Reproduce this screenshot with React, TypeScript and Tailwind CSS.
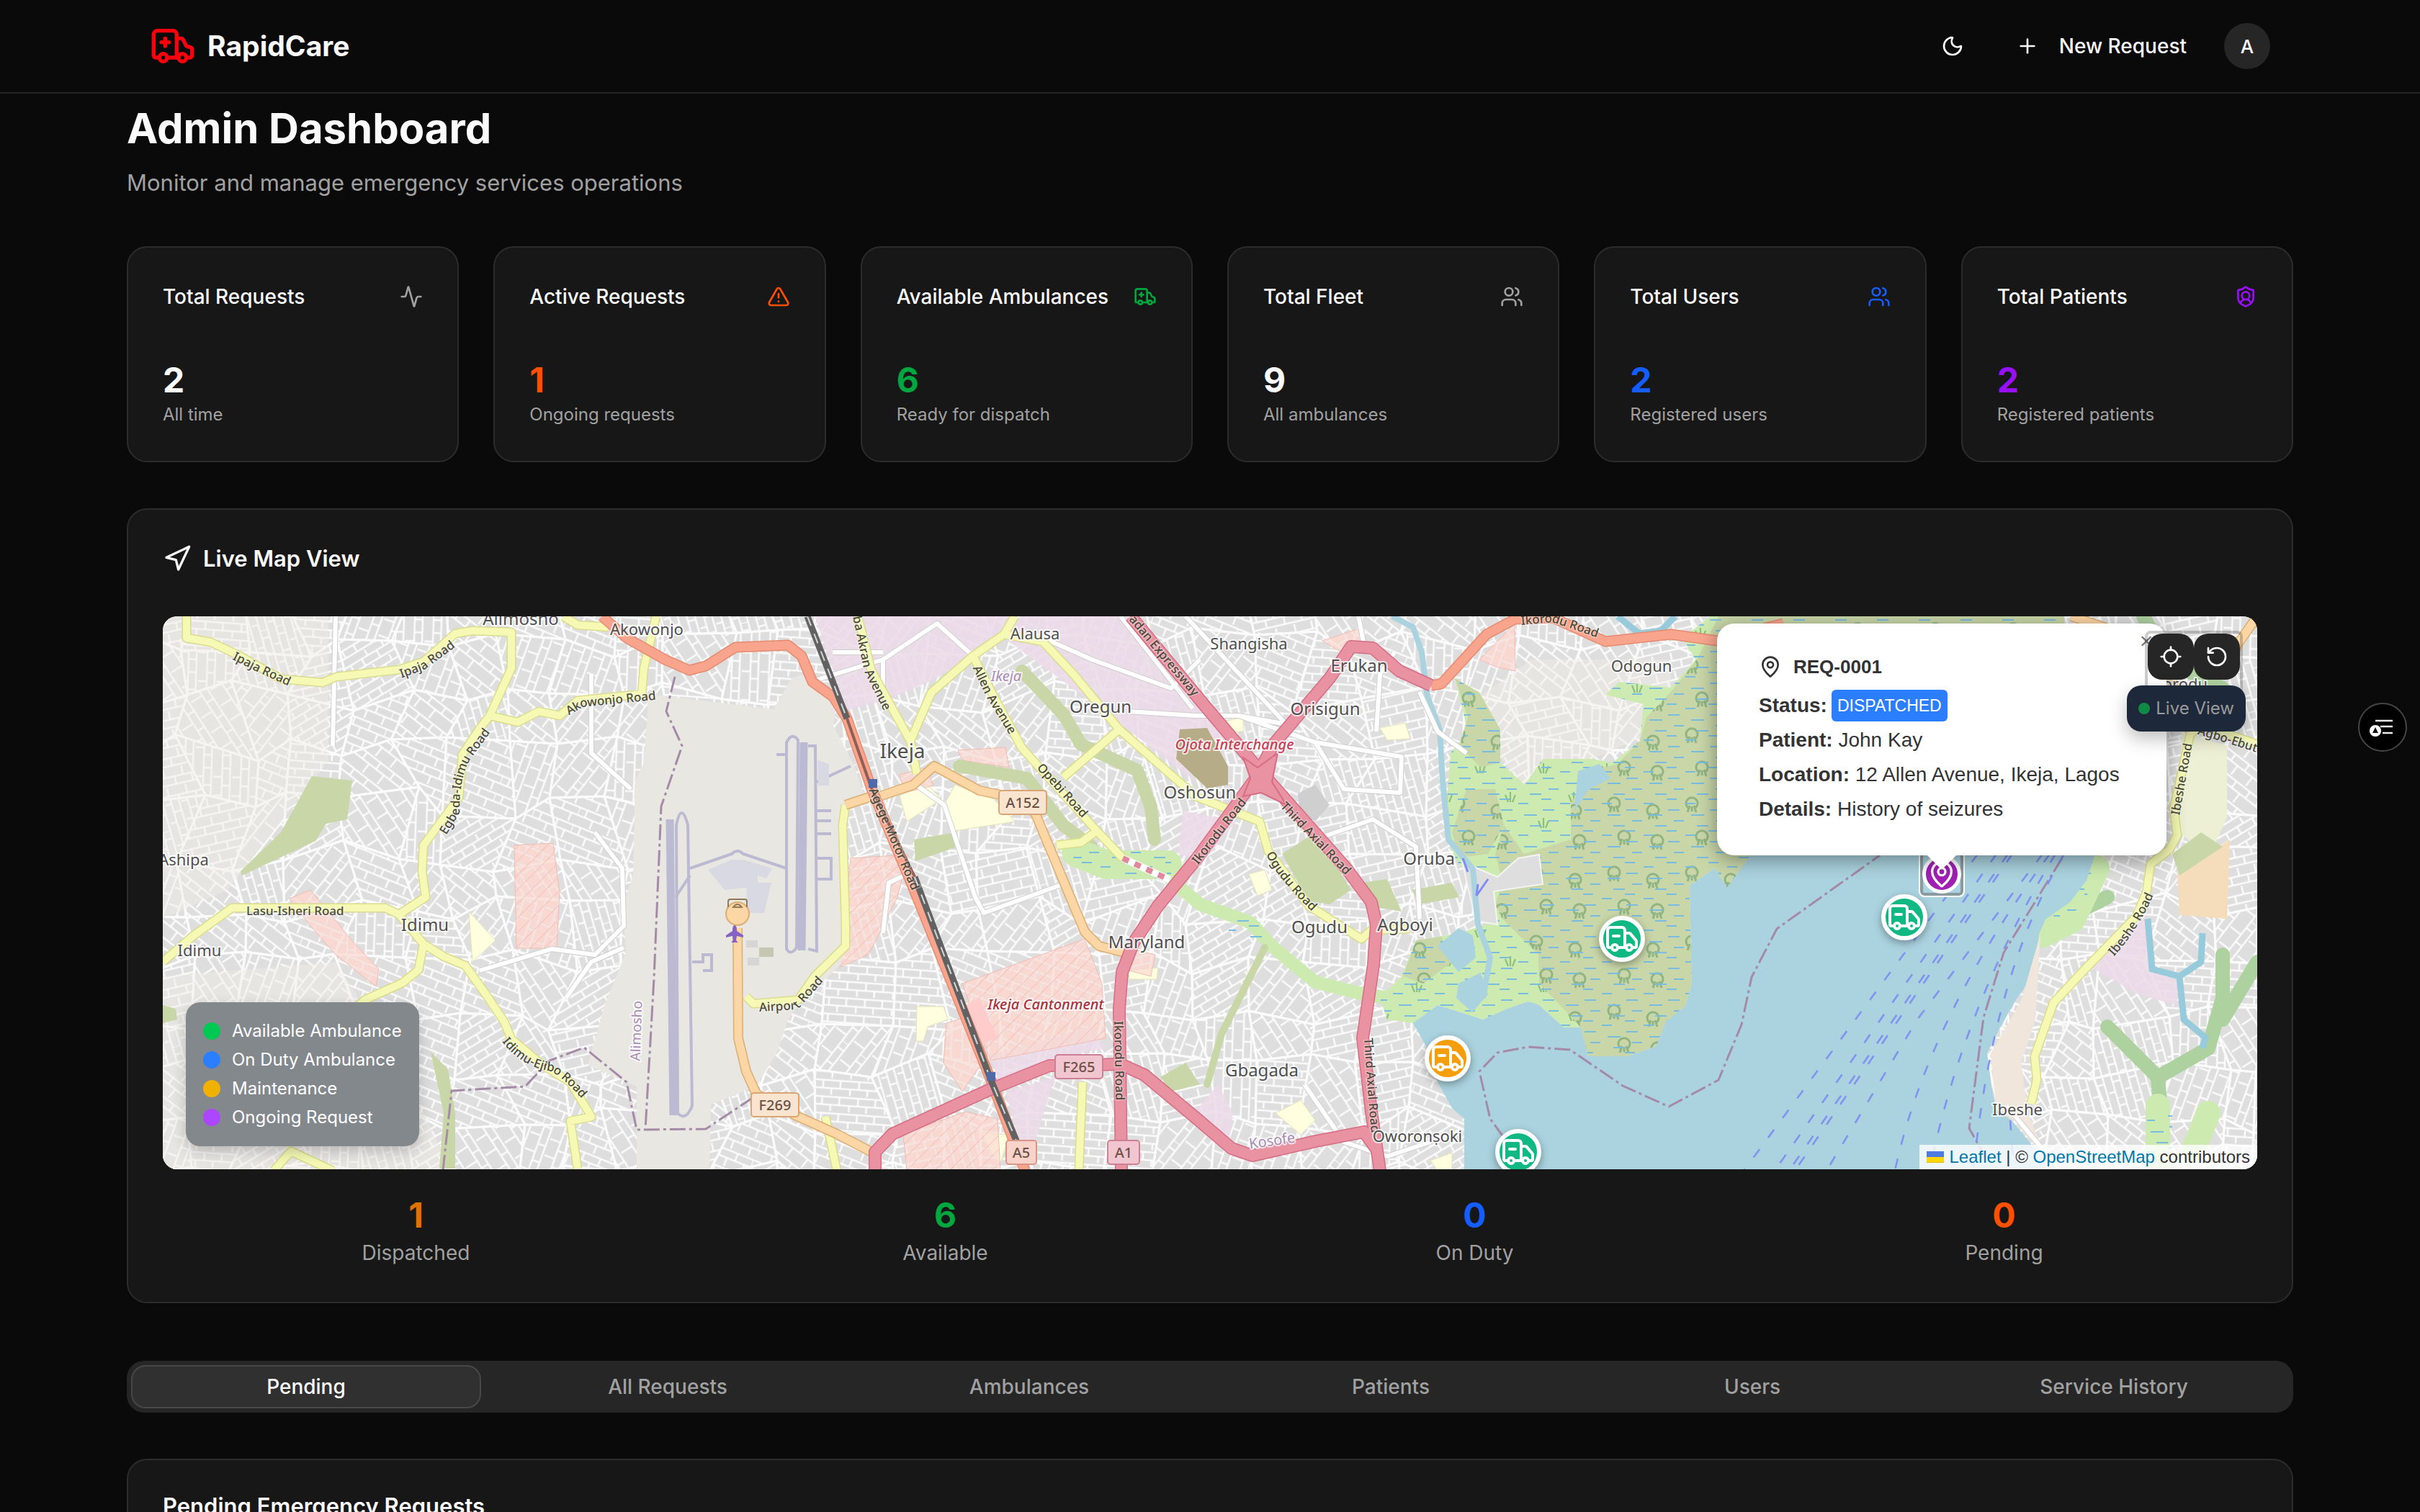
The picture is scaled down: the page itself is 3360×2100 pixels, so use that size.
import { useState } from 'react';
import {
  Activity,
  Ambulance,
  Locate,
  MapPin,
  Moon,
  Navigation,
  Plus,
  RotateCcw,
  ShieldUser,
  TriangleAlert,
  Users,
} from 'lucide-react';
import type { LucideIcon } from 'lucide-react';

interface Stat {
  title: string;
  value: number;
  caption: string;
  icon: LucideIcon;
  iconClass: string;
  valueClass: string;
}

const stats: Stat[] = [
  { title: 'Total Requests', value: 2, caption: 'All time', icon: Activity, iconClass: 'text-[#a1a1a1]', valueClass: 'text-[#fafafa]' },
  { title: 'Active Requests', value: 1, caption: 'Ongoing requests', icon: TriangleAlert, iconClass: 'text-[#ff4f00]', valueClass: 'text-[#ff4f00]' },
  { title: 'Available Ambulances', value: 6, caption: 'Ready for dispatch', icon: Ambulance, iconClass: 'text-[#00a63e]', valueClass: 'text-[#00a63e]' },
  { title: 'Total Fleet', value: 9, caption: 'All ambulances', icon: Users, iconClass: 'text-[#a1a1a1]', valueClass: 'text-[#fafafa]' },
  { title: 'Total Users', value: 2, caption: 'Registered users', icon: Users, iconClass: 'text-[#155dfc]', valueClass: 'text-[#155dfc]' },
  { title: 'Total Patients', value: 2, caption: 'Registered patients', icon: ShieldUser, iconClass: 'text-[#9810fa]', valueClass: 'text-[#9810fa]' },
];

const mapTotals = [
  { label: 'Dispatched', value: 1, color: 'text-[#e17100]' },
  { label: 'Available', value: 6, color: 'text-[#00a63e]' },
  { label: 'On Duty', value: 0, color: 'text-[#155dfc]' },
  { label: 'Pending', value: 0, color: 'text-[#ff4f00]' },
];

const legend = [
  { label: 'Available Ambulance', color: 'bg-[#00c951]' },
  { label: 'On Duty Ambulance', color: 'bg-[#2b7fff]' },
  { label: 'Maintenance', color: 'bg-[#f0b100]' },
  { label: 'Ongoing Request', color: 'bg-[#ad46ff]' },
];

const tabs = ['Pending', 'All Requests', 'Ambulances', 'Patients', 'Users', 'Service History'];

const ambulances = [
  { x: 2026, y: 448, color: 'bg-[#10b981]' },
  { x: 1784, y: 614, color: 'bg-[#f59e0b]' },
  { x: 1882, y: 744, color: 'bg-[#10b981]' },
  { x: 2418, y: 418, color: 'bg-[#10b981]' },
];

// ---- base map ----

const makeRandom = (seed: number) => () => {
  seed = (seed * 16807) % 2147483647;
  return seed / 2147483647;
};

const streetAngles = [4, 22, 38, 57, 74, 92, 110, 128, 149, 167];

const buildBlocks = () => {
  const rand = makeRandom(4211);
  const step = 74;
  const cols = 41;
  const rows = 12;
  const pts: number[][][] = [];
  for (let r = 0; r <= rows; r++) {
    pts.push([]);
    for (let c = 0; c <= cols; c++) {
      pts[r].push([
        Math.round((c - 0.5) * step + (rand() - 0.5) * 46),
        Math.round((r - 0.5) * step + (rand() - 0.5) * 46),
      ]);
    }
  }
  const blocks: { d: string; n: number }[] = [];
  for (let r = 0; r < rows; r++) {
    for (let c = 0; c < cols; c++) {
      const d = [pts[r][c], pts[r][c + 1], pts[r + 1][c + 1], pts[r + 1][c]].map((p) => p.join(' ')).join('L');
      blocks.push({ d: `M${d}Z`, n: Math.floor(rand() * streetAngles.length) });
    }
  }
  return blocks;
};

const blocks = buildBlocks();

const STREETS = 'M0 3H70M0 14H70M10 3V14M34 3V14M22 14V36M48 14V36M58 3V14';

const WETLAND =
  'M1794 86L1828 106L1857 157L1857 203L1891 234L1916 198L1983 198L2013 203L2051 173L2056 122L2003 109L2022 91L2094 99L2128 60L2110 30L2149 0H2640V330H2206L2200 354L2172 377L2155 350L2117 367L2120 374L2123 511L2114 541L2086 564L2074 597L2034 611L1979 611L1969 571L1945 571L1911 540L1896 535L1867 545L1833 560L1770 540L1736 565L1700 560L1690 530L1720 500L1740 450L1800 440L1836 428L1850 400L1826 372L1796 340L1782 300L1784 240L1788 190L1812 160Z';
const MANGROVE =
  'M2094 105L2060 140L2051 173L2020 205L1980 215L1955 260L1955 310L1890 330L1862 290L1850 330L1860 370L1850 400L1860 420L1910 470L1911 510L1945 545L1969 571L1979 611L2034 611L2074 597L2086 564L2114 541L2123 511L2120 374L2155 350L2172 377L2206 334L2640 330V0H2160L2130 60ZM1794 86L1828 106L1857 157L1857 203L1830 210L1800 180L1812 140ZM1810 240H1850L1862 290L1840 330L1800 335L1790 300ZM1740 450L1775 445L1790 480L1750 510L1722 500Z';
const LAGOON =
  'M1736 565L1770 540L1833 560L1867 545L1896 535L1911 540L1945 571L1969 571L1979 611L2034 611L2074 597L2086 564L2114 541L2123 511L2120 374L2155 350L2172 377L2206 330H2683L2671 367L2648 397L2614 421L2605 441L2599 497L2574 531L2551 571L2533 607L2539 651L2545 684L2568 701L2597 737L2614 754V770H1807V698L1790 683L1770 647L1756 601Z';

const pinkAreas = [
  'M905 0H1180L1150 40L1067 90L1000 118L950 130Z',
  'M1190 0H1345L1434 101L1494 168L1407 178L1434 230L1333 152L1231 76L1168 30Z',
  'M1416 270L1490 285L1445 340L1410 330Z',
  'M1149 610L1290 570L1310 600L1231 615L1160 645Z',
  'M1170 660L1239 640L1220 700L1200 770Z',
  'M1432 690L1465 650L1486 690L1480 730Z',
  'M2754 414L2760 491L2797 507L2797 541L2740 524L2677 487L2723 447Z',
];

const redAreas = [
  'M488 318L542 315L551 384L547 461H491Z',
  'M955 336L1035 331L1020 390L980 470L940 487Z',
  'M1110 510L1280 448L1304 510L1309 586L1149 617Z',
  'M1028 719L1115 688L1159 698L1163 770H1033Z',
  'M176 392L205 380L230 410L262 450L300 490L296 514L240 470L205 430Z',
  'M1023 220L1060 210L1070 235L1030 245Z',
  'M1104 186L1170 182L1175 210L1110 200Z',
  'M1088 565L1120 555L1145 610L1110 660L1084 620Z',
  'M1610 34L1664 16L1672 36L1640 52Z',
  'M1828 60L1877 10L1878 76L1850 70Z',
  'M1336 460L1378 470L1372 500L1334 490Z',
];

const yellowAreas = [
  'M1086 260L1100 234L1154 254L1183 285L1100 298Z',
  'M1023 249L1062 234L1081 254L1033 285Z',
  'M1047 542H1084L1090 560L1062 570L1056 590H1046Z',
  'M425 410L462 450L430 480Z',
  'M1136 717L1175 720L1163 760L1150 745Z',
  'M1508 358L1530 352L1540 380L1520 388Z',
  'M1690 155L1725 148L1732 170L1700 172Z',
  'M1545 690L1580 672L1600 700L1580 720Z',
  'M1340 492L1382 488L1380 504L1342 504Z',
  'M1760 756L1790 745L1790 770H1770Z',
  'M1478 145L1500 140V160H1480Z',
];

const greenAreas = [
  'M108 354L164 300L207 222L263 228L256 282L227 288L212 312L110 360Z',
  'M372 605L396 629L406 690V767H384L390 690Z',
  'M1043 310L1100 300L1104 320L1045 340Z',
  'M0 540L18 545L20 560L0 565Z',
  'M1385 640L1420 620L1440 650L1400 660Z',
  'M1554 330L1600 300L1650 380L1620 400L1590 395Z',
  'M1664 370L1700 365L1720 410L1690 405Z',
  'M1734 380L1790 370L1800 390L1745 400Z',
  'M2790 330L2830 300L2860 320L2800 360Z',
];

const yellowRoads = [
  'M33 0V30L67 36L105 54L164 87L222 92L241 84L328 74L362 63L406 24L430 20L484 22V72L454 138L440 156L416 192L411 252L362 318L360 354L365 390L328 414',
  'M0 480L42 444L96 405H309L328 414L362 455L391 473L420 485L450 527L474 563L484 587L527 623L566 647L595 695L566 701L576 767',
  'M362 455L355 491L333 509L280 533L230 575',
  'M454 138L493 147L522 132L551 138L576 117L665 108L668 72L685 0',
  'M556 0L576 12L619 15',
  'M154 770L178 743L236 770',
  'M965 0L984 76L1038 173L1047 219',
  'M1038 173L1067 106L1125 55L1168 25L1183 0',
  'M1125 55L1154 112L1193 183L1294 295L1333 336',
  'M1168 25L1222 35L1265 81L1328 157L1434 250L1523 285L1535 326L1591 402L1664 448L1678 436L1731 434',
  'M1328 157L1250 224',
  'M1294 300L1275 314L1241 318',
  'M1277 647L1272 770',
  'M948 262L944 290L948 430V458L905 500L882 533L820 538L810 528',
  'M920 695L936 770',
  'M2815 164L2792 267L2797 304L2786 324L2760 344L2754 384L2740 417L2665 494L2625 537L2599 611L2602 644L2594 677',
  'M2815 164L2830 150L2908 178',
];

const orangeRoads = [
  'M798 433L799 586L810 632L824 663L878 693L936 719L984 744',
  'M984 254L1042 234L1071 208L1134 242L1193 254L1212 275L1280 438L1300 458L1343 469L1331 494',
  'M984 250L948 262',
  'M2650 0L2740 30L2790 90L2815 160',
  'M2908 0L2880 40L2870 70',
];

const salmonRoads = [
  'M610 0L644 30L697 60L731 75L754 69L795 43L868 40L887 55L902 91L931 112L950 142L984 239L1042 377L1149 642L1197 770',
  'M1761 96L1775 94L1838 25L1877 4L1930 2L2003 35L2094 25L2158 34L2250 10',
];

const motorways = [
  'M1344 0L1445 122L1523 214L1644 351L1678 397L1685 428L1681 484L1666 586L1678 688L1690 770',
  'M1761 96L1717 76L1680 44L1650 42L1620 86L1542 178L1518 224L1436 336L1382 402L1348 453L1332 494L1328 545L1331 770',
  'M989 770V744L1013 719L1149 657L1231 624L1330 622L1363 637L1436 698L1484 739L1513 749L1601 729L1668 716L1685 740',
];

const whiteRoads = [
  'M1420 0L1560 150L1494 138L1434 138L1340 132',
  'M1330 0L1430 128',
  'M1200 20L1290 60L1400 100L1440 60',
  'M930 50H1000M1000 60V110',
  'M902 90L1000 60L1075 10L1125 55',
  'M1494 138L1600 175L1720 195L1718 245L1640 240L1600 175',
  'M1040 230L1085 262L1128 390L1140 412L1250 372',
  'M1600 310L1680 282L1740 320L1745 420',
  'M440 492L540 462L600 470L640 430L638 350L600 300',
  'M240 0L236 180',
  'M595 80V190L650 240',
  'M1000 440L1008 370L1040 355',
  'M1745 105L1770 160L1810 190',
  'M1685 160L1690 80L1710 50',
  'M1585 650L1640 730L1700 750L1760 730',
  'M2560 680L2610 740',
  'M560 530L595 480L640 460',
  'M1660 0L1668 40',
];

const boundaries = [
  'M711 84L699 132L721 180L692 264L682 503L670 713',
  'M389 770L401 659L503 653L537 617L585 599L644 647L658 713L754 712L820 668',
  'M1862 724L1843 698L1828 632L1853 606L1896 598L1954 602L2027 652L2091 681L2160 644L2192 567L2206 501L2241 434L2384 332',
  'M2637 336L2556 467L2528 557L2508 711L2530 750',
];

const ferries = [
  'M2520 330L2195 770',
  'M2546 330L2238 770',
  'M2562 330L2258 770',
  'M2568 330L2266 770',
  'M2610 330L2436 560L2310 770',
  'M2620 330Q2450 560 2405 770',
  'M2628 330Q2500 540 2453 770',
  'M2640 330Q2540 500 2514 770',
  'M2565 700L2570 770',
];

const places = [
  { t: 'Alimosho', x: 497, y: 12, s: 24 },
  { t: 'Akowonjo', x: 672, y: 26, s: 22 },
  { t: 'Ashipa', x: 29, y: 346, s: 22 },
  { t: 'Idimu', x: 364, y: 437, s: 24 },
  { t: 'Idimu', x: 51, y: 472, s: 22 },
  { t: 'Ikeja', x: 1027, y: 197, s: 28 },
  { t: 'Alausa', x: 1211, y: 32, s: 22 },
  { t: 'Oregun', x: 1302, y: 134, s: 24 },
  { t: 'Shangisha', x: 1508, y: 46, s: 22 },
  { t: 'Erukan', x: 1661, y: 77, s: 24 },
  { t: 'Orisigun', x: 1614, y: 137, s: 24 },
  { t: 'Odogun', x: 2053, y: 77, s: 22 },
  { t: 'Oshosun', x: 1440, y: 253, s: 24 },
  { t: 'Oruba', x: 1758, y: 345, s: 24 },
  { t: 'Ogudu', x: 1606, y: 440, s: 24 },
  { t: 'Agboyi', x: 1725, y: 437, s: 24 },
  { t: 'Maryland', x: 1366, y: 461, s: 24 },
  { t: 'Gbagada', x: 1526, y: 639, s: 24 },
  { t: 'Oworonṣoki', x: 1742, y: 730, s: 22 },
  { t: 'Ibeshe', x: 2575, y: 693, s: 22 },
  { t: 'orodu', x: 2808, y: 102, s: 22 },
];

const roadNames = [
  { t: 'Ipaja Road', d: 'M98 56L130 72L200 104' },
  { t: 'Ipaja Road', d: 'M330 82L362 70L430 20' },
  { t: 'Akowonjo Road', d: 'M562 134L582 122L720 108' },
  { t: 'Egbeda-Idimu Road', d: 'M390 302L408 272Q408 220 424 196L480 120' },
  { t: 'Lasu-Isheri Road', d: 'M116 411H300' },
  { t: 'Idimu-Ejibo Road', d: 'M474 588Q500 622 540 628Q566 640 620 710' },
  { t: 'ba Akran Avenue', d: 'M962 0L978 76L1020 160' },
  { t: 'Allen Avenue', d: 'M1128 70L1148 112L1200 196' },
  { t: 'Opebi Road', d: 'M1216 208L1300 300' },
  { t: 'Agege Motor Road', d: 'M984 240L1054 404' },
  { t: 'Airport Road', d: 'M828 545L880 542L950 464' },
  { t: 'adan Expressway', d: 'M1344 2L1466 148' },
  { t: 'Ikorodu Road', d: 'M1434 343L1522 230' },
  { t: 'Third Axial Road', d: 'M1554 262L1680 393' },
  { t: 'Ogudu Road', d: 'M1536 328Q1544 356 1616 424' },
  { t: 'Ikorodu Road', d: 'M1325 562L1328 710' },
  { t: 'Third Axial Road', d: 'M1672 586Q1676 650 1686 768' },
  { t: 'Ikorodu Road', d: 'M1886 8L1930 4L2040 42' },
  { t: 'Ibeshe Road', d: 'M2796 276L2822 130' },
  { t: 'Ibeshe Road', d: 'M2706 470Q2750 420 2770 360' },
  { t: 'Agbo-Ebute', d: 'M2826 160Q2870 172 2940 196' },
];

const shields = [
  { t: 'A152', x: 1161, y: 242, w: 66, fill: '#f8e4cf', line: '#d9a673' },
  { t: 'F269', x: 817, y: 662, w: 66, fill: '#f8e4cf', line: '#d9a673' },
  { t: 'F265', x: 1239, y: 609, w: 66, fill: '#f1c6d0', line: '#cf7f93' },
  { t: 'A5', x: 1171, y: 728, w: 42, fill: '#f8d3ca', line: '#dc9484' },
  { t: 'A1', x: 1312, y: 728, w: 44, fill: '#f1c6d0', line: '#cf7f93' },
];

const Roads = ({ paths, fill, casing, width }: { paths: string[]; fill: string; casing: string; width: number }) => (
  <g fill="none" strokeLinejoin="round">
    <path d={paths.join('')} stroke={casing} strokeWidth={width + 3} />
    <path d={paths.join('')} stroke={fill} strokeWidth={width} />
  </g>
);

const BaseMap = () => (
  <svg
    viewBox="0 0 2908 768"
    preserveAspectRatio="xMidYMid slice"
    className="block h-full w-full font-['Noto_Sans',sans-serif]"
    aria-label="Street map of Lagos"
  >
    <defs>
      {streetAngles.map((angle, i) => (
        <pattern
          key={angle}
          id={`streets-${i}`}
          width={50 + (i % 3) * 8}
          height={23 + (i % 4) * 3}
          patternUnits="userSpaceOnUse"
          patternTransform={`rotate(${angle})`}
        >
          <g fill="none">
            <path d={STREETS} stroke="#d0d0d0" strokeWidth="4" />
            <path d={STREETS} stroke="#fbfbfb" strokeWidth="3" />
          </g>
        </pattern>
      ))}
      <pattern id="marsh" width="58" height="44" patternUnits="userSpaceOnUse">
        <path d="M2 5H18M34 12H52M10 20H24M42 27H58M0 34H14M26 40H40" stroke="#78bce2" strokeWidth="2" />
      </pattern>
      <pattern id="trees" width="108" height="96" patternUnits="userSpaceOnUse">
        <g fill="none" stroke="#90b482" strokeWidth="3">
          <path d="M18 30A8 8 0 1 1 28 30M17 36L20 27M29 36L26 27M23 28V35" />
          <path d="M66 74A8 8 0 1 1 76 74M65 80L68 71M77 80L74 71M71 72V79" />
          <path d="M80 24A8 8 0 1 1 90 24M79 30L82 21M91 30L88 21M85 22V29" />
          <path d="M12 84A8 8 0 1 1 22 84M11 90L14 81M23 90L20 81M17 82V89" />
        </g>
      </pattern>
      <pattern id="reeds" width="88" height="76" patternUnits="userSpaceOnUse">
        <path d="M20 30L16 20M23 30V16M26 30L30 20M66 66L62 56M69 66V52M72 66L76 56" stroke="#8cc07c" strokeWidth="2.2" />
      </pattern>
      <pattern id="hatch" width="14" height="14" patternUnits="userSpaceOnUse" patternTransform="rotate(45)">
        <path d="M0 0V14" stroke="#f5b8b0" strokeWidth="1.5" />
      </pattern>
    </defs>

    <rect width="2908" height="768" fill="#dedede" />
    <path d={pinkAreas.join('')} fill="#ebdbe8" />
    <path d={yellowAreas.join('')} fill="#ffffe0" />
    <path d={redAreas.join('')} fill="#f8d5cd" />
    {blocks.map((b, i) => (
      <path key={i} d={b.d} fill={`url(#streets-${b.n})`} stroke="#fbfbfb" strokeWidth="3" />
    ))}
    <path
      d="M0 0H230L230 200L90 380L0 420ZM0 500L240 480L330 620L400 770H0ZM1830 110L1900 60H2094V110L2050 170L1980 200L1890 235L1860 200Z"
      fill="#f2eee6"
      fillOpacity="0.45"
    />
    <path d={pinkAreas.join('')} fill="#ebdbe8" fillOpacity="0.85" />
    <path d={yellowAreas.join('')} fill="#ffffe0" stroke="#e2e2b8" />
    <path d={redAreas.join('')} fill="#f8d9d1" fillOpacity="0.7" stroke="#f2bcb2" />
    <path d={redAreas.slice(0, 4).join('')} fill="url(#hatch)" />
    <path d="M1115 540L1134 530L1159 586L1132 596Z" fill="#ffcccc" />
    <path d="M2803 160L2866 180L2866 280L2843 330L2798 300Z" fill="#eef0d5" />
    <path d="M2797 357L2870 310L2866 420L2800 415Z" fill="#f5dcba" />

    {/* parks and canals */}
    <path d={greenAreas.join('')} fill="#c8d6a8" />
    <g fill="none" strokeLinejoin="round" strokeLinecap="round">
      <path d="M1193 76L1222 106L1251 137L1275 178L1353 214L1372 265L1377 310M1106 208L1200 225L1250 290L1290 320" stroke="#c8d6a8" strokeWidth="18" />
      <path d="M1400 366L1440 400L1510 425L1540 458L1600 508L1680 528L1740 530" stroke="#cdebb0" strokeWidth="18" />
      <path d="M1268 328L1310 345L1395 345" stroke="#cdebb0" strokeWidth="40" />
      <path d="M1530 460L1500 520L1470 580L1450 650" stroke="#c8d6a8" strokeWidth="10" />
      <path d="M2750 0L2780 60L2860 100M2860 470V530L2840 600L2770 640L2700 570M2908 480L2860 560M2770 640L2775 700M2700 390L2640 420" stroke="#aed1a0" strokeWidth="20" />
      <path d="M2770 680V760M2840 690L2820 740" stroke="#cdebb0" strokeWidth="34" />
      <path d="M2683 350L2650 420L2610 440" stroke="#cdebb0" strokeWidth="40" />
    </g>
    <path d="M1255 310L1400 330V366L1270 350ZM1480 410L1530 430V460L1480 440ZM2650 350L2680 340L2670 400L2620 430ZM2755 690H2790V760H2755Z" fill="url(#marsh)" />
    <path d="M1412 157L1450 155L1479 208V234L1450 239L1407 198Z" fill="#b6ad88" />
    <path d="M1576 246L1600 234L1620 262L1600 285L1578 270Z" fill="#cfcfcf" />

    {/* wetlands and lagoon */}
    <path d={WETLAND} fill="#cdebb0" />
    <path d={WETLAND} fill="url(#reeds)" />
    <path d={MANGROVE} fill="#c8d6a8" />
    <path d={MANGROVE} fill="url(#trees)" />
    <path d={WETLAND} fill="url(#marsh)" />
    <path d="M1804 341L1853 362L1882 336L1911 331L1916 372L1848 382L1853 428L1823 423Z" fill="#dedede" stroke="#f4f4f4" strokeWidth="2" />
    <path d={LAGOON} fill="#aad3df" />
    <path d="M1770 458L1799 433L1819 443L1823 474L1799 494ZM1799 510L1830 495L1840 525L1818 550L1796 530ZM1965 215L1995 205L2010 225L1980 240L1960 270Z" fill="#aad3df" />
    <path
      d="M1707 0L1736 15L1748 50L1756 112L1773 157L1777 229L1785 310L1819 351L1826 428L1843 474L1833 530"
      fill="none"
      stroke="#aad3df"
      strokeWidth="8"
    />
    <path d="M2020 0L2050 24L2080 20L2100 0M2756 420L2762 490L2800 500L2806 560L2836 585L2832 600M2832 440L2830 480L2800 500" fill="none" stroke="#97cbdc" strokeWidth="9" />
    <path d="M2607 441L2580 535L2538 607L2545 680L2570 700L2614 752L2590 690L2580 620L2600 560Z" fill="#f0e6dc" />
    <path d="M1805 336L1812 355M1826 372L1824 388L1840 365" fill="none" stroke="#7e8cf5" strokeWidth="3" />

    {/* airport */}
    <path
      d="M673 108V132L668 204L656 228L653 360L639 401L643 467L614 539L590 623L658 653V770H759L761 678L824 652L853 606L868 560L882 540L941 484L950 443L948 260L974 249L960 208L931 152L936 117L887 81L873 86L848 129Z"
      fill="#e9e7e2"
    />
    <g fill="none" stroke="#bbbad2">
      <path d="M704 282L709 693M890 175L887 464" strokeWidth="11" />
      <path d="M713 290Q720 256 729 290L735 680Q726 702 715 690ZM866 175Q874 160 882 172L880 460Q872 472 866 462ZM896 180H906L908 465L896 462" strokeWidth="4" />
      <path d="M732 350L790 330Q798 322 806 330L866 350M712 390L732 360M735 480H750V470H762V492H750M852 192H866M908 270H928M908 284H928M908 302H928M908 336H928V365H908M908 230L955 208" strokeWidth="4" />
    </g>
    <path d="M757 352L790 338L806 338L846 350L838 364L826 360V375L780 380ZM909 200L925 205V235H910ZM810 370H845L835 412H812Z" fill="#d9d9e4" />
    <path d="M828 460H848V473H828Z" fill="#c5c7b2" />
    <path d="M810 450H826V460H810ZM812 474H828V485H812Z" fill="#d6d6d6" />

    <path d={whiteRoads.join('')} fill="none" stroke="#cfcfcf" strokeWidth="8" strokeLinejoin="round" />
    <path d={whiteRoads.join('')} fill="none" stroke="#ffffff" strokeWidth="6" strokeLinejoin="round" />
    <Roads paths={yellowRoads} fill="#f5f9b4" casing="#d9dc8e" width={10} />
    <Roads paths={orangeRoads} fill="#fcd6a4" casing="#dcae72" width={11} />
    <circle cx="798" cy="413" r="16" fill="#fcd6a4" stroke="#dcae72" strokeWidth="2" />
    <path d="M785 404V396Q785 393 788 393H808Q811 393 811 396V404M792 404Q798 396 804 404Z" fill="none" stroke="#8f7a56" strokeWidth="2" />
    <Roads paths={salmonRoads} fill="#f9a58d" casing="#e58a70" width={12} />
    <Roads paths={motorways} fill="#e892a2" casing="#d66c84" width={15} />
    <path d="M1500 196L1520 210L1548 190L1540 230L1560 262L1525 245L1500 250L1510 225Z" fill="#e892a2" stroke="#d66c84" strokeWidth="2" />
    <path d="M1333 336L1398 366" stroke="#ffffff" strokeWidth="10" />
    <path d="M1333 336L1398 366" stroke="#e0899c" strokeWidth="8" strokeDasharray="9 9" />
    <path d="M895 0L950 142M1044 362L1149 642L1190 740" fill="none" stroke="#626262" strokeWidth="9" />
    <path d="M895 0L950 142M1044 362L1149 642L1190 740" fill="none" stroke="#d6d6d6" strokeWidth="2" strokeDasharray="14 12" />
    <path d="M950 142L984 239L1044 362" fill="none" stroke="#8f5f56" strokeWidth="4" />
    <path d="M980 226H992V238H980ZM1144 633H1156V645H1144Z" fill="#4f6aa8" />
    <g fill="none" strokeLinejoin="round">
      <path d={boundaries.join('')} stroke="#a58aa8" strokeWidth="3" strokeDasharray="22 5 4 5" />
      <path d={ferries.join('')} stroke="#7f93ef" strokeWidth="2.6" strokeDasharray="14 20" />
    </g>
    <path
      d="M794 429Q797 429 797 437L806 443V446L797 444L796 450L799 453H789L792 450L791 444L782 446V443L791 437Q791 429 794 429Z"
      fill="#8461c4"
    />

    <g fontSize="17" fontWeight="500" fill="#4a4a3a" stroke="#ffffff" strokeOpacity="0.35" strokeWidth="3" paintOrder="stroke">
      {roadNames.map((r, i) => (
        <g key={i}>
          <path id={`road-${i}`} d={r.d} fill="none" stroke="none" />
          <text dy="4">
            <textPath href={`#road-${i}`}>{r.t}</textPath>
          </text>
        </g>
      ))}
    </g>
    {shields.map((s) => (
      <g key={s.t}>
        <rect x={s.x} y={s.y} width={s.w} height="33" rx="4" fill={s.fill} stroke={s.line} strokeWidth="2" />
        <text x={s.x + s.w / 2} y={s.y + 24} textAnchor="middle" fontSize="20" fontWeight="500" fill="#6e5246">
          {s.t}
        </text>
      </g>
    ))}
    <g textAnchor="middle" fill="#505050" stroke="#ffffff" strokeOpacity="0.75" strokeWidth="4" paintOrder="stroke" strokeLinejoin="round">
      {places.map((p, i) => (
        <text key={i} x={p.x} y={p.y} fontSize={p.s}>
          {p.t}
        </text>
      ))}
      <text x="1488" y="185" fontSize="20" fontStyle="italic" fontWeight="500" fill="#c63f55">Ojota Interchange</text>
      <text x="1226" y="546" fontSize="20" fontStyle="italic" fontWeight="500" fill="#a8323c">Ikeja Cantonment</text>
      <text x="1171" y="90" fontSize="20" fontStyle="italic" fill="#a98bb5">Ikeja</text>
      <text x="0" y="0" fontSize="19" fill="#a98bb5" transform="translate(664 576) rotate(-88)">Alimosho</text>
      <text x="0" y="0" fontSize="20" fill="#a98bb5" transform="translate(1541 735) rotate(-8)">Kosofe</text>
    </g>
  </svg>
);

// ---- map overlays ----

const TruckIcon = () => (
  <svg viewBox="0 0 24 24" className="size-12 shrink-0" fill="none" stroke="currentColor" strokeWidth="2" strokeLinecap="round" strokeLinejoin="round">
    <path d="M10 10H6" />
    <path d="M14 18V6a2 2 0 0 0-2-2H4a2 2 0 0 0-2 2v11a1 1 0 0 0 1 1h2" />
    <path d="M19 18h2a1 1 0 0 0 1-1v-3.28a1 1 0 0 0-.27-.7l-3.86-4.6A1 1 0 0 0 17.1 8H14" />
    <path d="M9 18h6" />
    <circle cx="17" cy="18" r="2" />
    <circle cx="7" cy="18" r="2" />
  </svg>
);

const RequestPopup = () => (
  <div className="absolute top-[10px] right-[126px] h-[322px] w-[624px] rounded-3xl bg-white pt-9 pl-[58px] font-['Liberation_Sans',sans-serif] text-[28px] leading-[48px] text-[#333333] shadow-[0_6px_28px_rgba(0,0,0,0.4)]">
    <div className="flex items-center gap-4 text-[26px] font-bold">
      <MapPin className="size-8" />
      REQ-0001
    </div>
    <div className="mt-[6px] flex items-center gap-[6px]">
      <strong>Status:</strong>
      <span className="rounded-md bg-[#2b7fff] px-2 text-[23px] leading-11 text-white">DISPATCHED</span>
    </div>
    <div><strong>Patient:</strong> John Kay</div>
    <div><strong>Location:</strong> 12 Allen Avenue, Ikeja, Lagos</div>
    <div><strong>Details:</strong> History of seizures</div>
    <button className="absolute top-0 right-1 size-12 text-[32px] text-[#757575]" aria-label="Close popup">×</button>
    <svg viewBox="0 0 40 20" className="absolute top-full left-[292px] h-5 w-10" fill="#ffffff">
      <path d="M0 0H40L22 18Q20 20 18 18Z" />
    </svg>
  </div>
);

const LiveMap = () => (
  <div className="relative h-[768px] overflow-hidden rounded-[20px] bg-[#dddddd]">
    <BaseMap />

    {ambulances.map((a, i) => (
      <button
        key={i}
        aria-label="Ambulance"
        style={{ left: a.x, top: a.y }}
        className={`absolute flex size-16 -translate-x-1/2 -translate-y-1/2 items-center justify-center rounded-full border-[6px] border-white text-white shadow-[0_4px_12px_rgba(0,0,0,0.35)] ${a.color}`}
      >
        <TruckIcon />
      </button>
    ))}

    <button
      aria-label="Request REQ-0001"
      className="absolute top-[326px] left-[2438px] flex size-16 items-center justify-center rounded-lg border-2 border-white ring-4 ring-[#8a9aa0] ring-inset"
    >
      <span className="flex size-[54px] shrink-0 items-center justify-center rounded-full border-[5px] border-white bg-[#a020b4] text-white">
        <MapPin className="size-10 shrink-0" />
      </span>
    </button>

    <RequestPopup />

    <div className="absolute top-5 right-5 h-24 w-[136px] rounded-lg border-4 border-black/20">
      <div className="flex">
        <button className="flex size-16 items-center justify-center rounded-[20px] bg-[#262626] text-white" aria-label="Center map">
          <Locate className="size-8" />
        </button>
        <button className="flex size-16 items-center justify-center rounded-[20px] bg-[#262626] text-white" aria-label="Reset view">
          <RotateCcw className="size-8" />
        </button>
      </div>
    </div>
    <div className="absolute top-24 right-4 flex h-16 items-center gap-2 rounded-[20px] bg-[#1d283a] px-4 text-2xl text-[#9a9a9a] shadow-[0_10px_24px_rgba(0,0,0,0.25)]">
      <span className="size-4 rounded-full bg-[#118a46]" />
      Live View
    </div>

    <ul className="absolute bottom-8 left-8 flex flex-col gap-2 rounded-[20px] bg-[#83888d] p-6 text-2xl text-white shadow-[0_8px_20px_rgba(0,0,0,0.2)]">
      {legend.map((l) => (
        <li key={l.label} className="flex items-center gap-4 leading-8">
          <span className={`size-6 rounded-full ${l.color}`} />
          {l.label}
        </li>
      ))}
    </ul>

    <div className="absolute right-0 bottom-0 flex items-center gap-2 bg-white/80 px-[10px] font-['Liberation_Sans',sans-serif] text-2xl leading-[34px] text-[#333333]">
      <svg viewBox="0 0 24 16" className="h-4 w-6">
        <path d="M0 0H24V8H0Z" fill="#4c7be1" />
        <path d="M0 8H24V16H0Z" fill="#ffd500" />
        <path d="M0 15H24V16H0Z" fill="#e0bc00" />
      </svg>
      <span className="leading-[34px]">
        <a href="#leaflet" className="text-[#0078a8]">Leaflet</a> | © <a href="#osm" className="text-[#0078a8]">OpenStreetMap</a> contributors
      </span>
    </div>
  </div>
);

const StatCard = ({ stat }: { stat: Stat }) => {
  const Icon = stat.icon;
  return (
    <div className="rounded-[28px] border-2 border-[#2c2c2c] bg-[#171717] p-12">
      <div className="flex h-10 items-center justify-between">
        <h2 className="text-[28px] font-medium">{stat.title}</h2>
        <Icon className={`size-8 ${stat.iconClass}`} />
      </div>
      <div className={`mt-16 text-5xl leading-16 font-bold ${stat.valueClass}`}>{stat.value}</div>
      <p className="text-2xl leading-8 text-[#a1a1a1]">{stat.caption}</p>
    </div>
  );
};

export default function App() {
  const [tab, setTab] = useState('Pending');

  return (
    <div className="relative h-screen overflow-hidden bg-[#0a0a0a] font-[Inter,sans-serif] text-[#fafafa]">
      <header className="border-b-2 border-[#262626]">
        <div className="mx-auto flex h-32 max-w-[3072px] items-center justify-between px-16">
          <a href="#home" className="flex items-center gap-4 text-[39px] font-bold">
            <Ambulance className="size-16 text-[#fb000d]" />
            RapidCare
          </a>
          <div className="flex items-center">
            <button className="flex size-16 items-center justify-center" aria-label="Toggle theme">
              <Moon className="size-8" />
            </button>
            <button className="ml-10 flex h-16 items-center gap-7 px-4 text-[28px] font-medium">
              <Plus className="size-8" />
              New Request
            </button>
            <button className="ml-9 size-16 rounded-full bg-[#262626] text-[26px] font-medium">A</button>
          </div>
        </div>
      </header>

      <main className="mx-auto max-w-[3072px] px-8 pt-3">
        <h1 className="text-[58px] leading-[72px] font-bold">Admin Dashboard</h1>
        <p className="mt-4 text-[31px] leading-[48px] text-[#a1a1a1]">Monitor and manage emergency services operations</p>

        <section className="mt-16 grid grid-cols-6 gap-12">
          {stats.map((s) => (
            <StatCard key={s.title} stat={s} />
          ))}
        </section>

        <section className="mt-16 rounded-[28px] border-2 border-[#2c2c2c] bg-[#171717] p-12">
          <h2 className="mb-[60px] flex h-10 items-center gap-4 text-[31px] font-semibold">
            <Navigation className="size-10" />
            Live Map View
          </h2>
          <LiveMap />
          <div className="mt-8 grid grid-cols-4 gap-8 text-center">
            {mapTotals.map((m) => (
              <div key={m.label}>
                <div className={`text-5xl leading-16 font-bold ${m.color}`}>{m.value}</div>
                <div className="text-[28px] leading-10 text-[#a1a1a1]">{m.label}</div>
              </div>
            ))}
          </div>
        </section>

        <div role="tablist" className="mt-20 grid h-[72px] grid-cols-6 gap-4 rounded-[24px] bg-[#262626] p-[6px]">
          {tabs.map((t) => (
            <button
              key={t}
              role="tab"
              aria-selected={t === tab}
              onClick={() => setTab(t)}
              className={`rounded-[20px] border-2 text-[28px] font-medium ${
                t === tab ? 'border-[#484848] bg-[#303030] text-[#fafafa]' : 'border-transparent text-[#a1a1a1]'
              }`}
            >
              {t}
            </button>
          ))}
        </div>

        <section className="mt-16 rounded-[28px] border-2 border-[#2c2c2c] bg-[#171717] p-12">
          <h2 className="text-[31px] leading-8 font-semibold">{tab} Emergency Requests</h2>
        </section>
      </main>

      <button
        aria-label="Open panel"
        className="absolute top-[976px] right-[18px] flex size-[68px] items-center justify-center rounded-full border-2 border-[#454545] bg-black"
      >
        <svg viewBox="0 0 34 26" className="mr-1 h-[26px] w-[34px] shrink-0">
          <path d="M9 4H33M16 12H33M19 21H33" stroke="#e8ece8" strokeWidth="2.6" />
          <circle cx="9" cy="18" r="8" fill="#ffffff" />
          <path d="M9 13L13 21H5Z" fill="#111111" />
        </svg>
      </button>
    </div>
  );
}
